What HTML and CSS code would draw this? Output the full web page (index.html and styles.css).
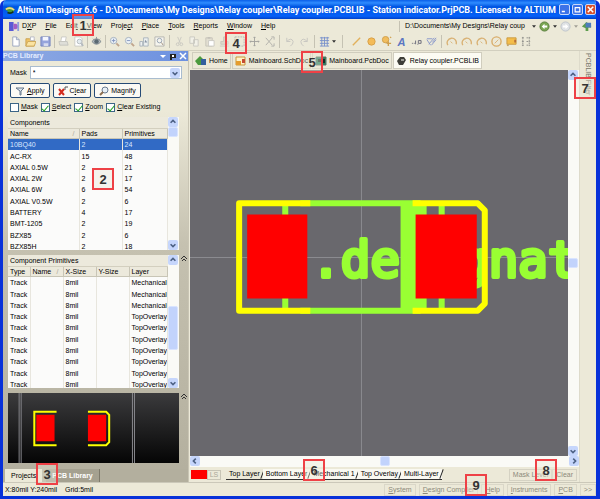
FILE: index.html
```html
<!DOCTYPE html>
<html lang="en">
<head>
    <meta charset="UTF-8">
    <meta name="viewport" content="width=device-width, initial-scale=1.0">
    <title>Altium Designer 6.6</title>
    <link rel="stylesheet" href="styles.css">
</head>
<body>
    <svg class="defs" aria-hidden="true">
        <symbol id="i-new" viewBox="0 0 12 12"><path d="M3 1h4l3 3v7H3z" fill="#fff" stroke="#99a5be"/><path d="M7 1v3h3" fill="none" stroke="#99a5be"/></symbol>
        <symbol id="i-open" viewBox="0 0 12 12"><path d="M1 3h4l1 1h4v7H1z" fill="#f0c465" stroke="#c9a050"/><path d="M6 1h4v4H6z" fill="#fff" stroke="#b7b9c4"/><path d="M3 6h9l-2 5H1z" fill="#fbe3a0" stroke="#cda75a"/></symbol>
        <symbol id="i-save" viewBox="0 0 12 12"><path d="M1 1h10v10H1z" fill="#96a4dc" stroke="#7482bb"/><path d="M3 1h6v4H3z" fill="#f4f6ff"/><path d="M4 8h5v3H4z" fill="#d7dcf0"/></symbol>
        <symbol id="i-print" viewBox="0 0 12 12"><path d="M4 1h5L8 6H3z" fill="#fff" stroke="#c9c9c5"/><path d="M1 6h9l1 4H2z" fill="#dedeD8" stroke="#c4c4be"/></symbol>
        <symbol id="i-preview" viewBox="0 0 12 12"><path d="M2 1h6l2 2v8H2z" fill="#fff" stroke="#c9c9c5"/><circle cx="7" cy="6" r="2.5" fill="#e4ebef" stroke="#b4babd"/><path d="M9 8l2 3" stroke="#b4babd" stroke-width="2"/></symbol>
        <symbol id="i-eye" viewBox="0 0 12 12"><path d="M1 6q5-6 10 0q-5 6-10 0z" fill="#b8bfc4" stroke="#7c858b"/><circle cx="6" cy="6" r="2.5" fill="#5a6972"/><path d="M2 3l1 1M6 1v2M10 3L9 4" stroke="#8a9298"/></symbol>
        <symbol id="i-zoom" viewBox="0 0 12 12"><circle cx="5" cy="5" r="3.5" fill="#edf3f7" stroke="#a3afbe"/><path d="M3 5h4M5 3v4" stroke="#7f92bc"/><path d="M8 8l3 3" stroke="#bfa48c" stroke-width="2"/></symbol>
        <symbol id="i-zoomout" viewBox="0 0 12 12"><circle cx="5" cy="5" r="3.5" fill="#edf3f7" stroke="#a3afbe"/><path d="M3 5h4" stroke="#7f92bc"/><path d="M8 8l3 3" stroke="#bfa48c" stroke-width="2"/></symbol>
        <symbol id="i-zoomsel" viewBox="0 0 12 12"><path d="M1 11V6h3v5zM5 11V2h5v9z" fill="#edf0f0" stroke="#a9b2bb"/><path d="M7 4l2 3H6z" fill="#8793a3"/></symbol>
        <symbol id="i-zoombox" viewBox="0 0 12 12"><path d="M1 1h10v10H1z" fill="#f5f4ed" stroke="#b4b4af"/><circle cx="6" cy="5" r="2.5" fill="none" stroke="#98a4b5"/><path d="M8 7l2 3" stroke="#a08e7d"/></symbol>
        <symbol id="i-cut" viewBox="0 0 12 12"><path d="M4 1l3 7M8 1L5 8" stroke="#c9c8c1" fill="none"/><circle cx="4" cy="9" r="1.5" fill="none" stroke="#c9c8c1"/><circle cx="8" cy="9" r="1.5" fill="none" stroke="#c9c8c1"/></symbol>
        <symbol id="i-copy" viewBox="0 0 12 12"><path d="M1 1h5v7H1zM5 4h5v7H5z" fill="#f2f1e8" stroke="#c9c8c1"/></symbol>
        <symbol id="i-paste" viewBox="0 0 12 12"><path d="M2 2h7v9H2z" fill="#e2dfd1" stroke="#c6c4b9"/><path d="M4 1h3v2H4z" fill="#c4c2b9"/><path d="M5 5h6v6H5z" fill="#fff" stroke="#c9c8c1"/></symbol>
        <symbol id="i-stamp" viewBox="0 0 12 12"><path d="M5 1h2v5h3v3H2V6h3zM1 11h10" fill="#ddd9c9" stroke="#c9c7bc"/></symbol>
        <symbol id="i-select" viewBox="0 0 12 12"><path d="M1 1h10v10H1z" fill="none" stroke="#8d9195" stroke-dasharray="2 1"/></symbol>
        <symbol id="i-move" viewBox="0 0 12 12"><path d="M6 1v10M1 6h10M5 2l1-1 1 1M5 10l1 1 1-1M2 5L1 6l1 1M10 5l1 1-1 1" fill="none" stroke="#a2a29e"/></symbol>
        <symbol id="i-cross" viewBox="0 0 12 12"><path d="M2 2l7 8M9 2L2 10" stroke="#b0afaa" fill="none"/><path d="M8 1h3v3M8 11h3V8" fill="none" stroke="#b0afaa"/></symbol>
        <symbol id="i-undo" viewBox="0 0 12 12"><path d="M3 2v4h4M3 6q5-5 7 0q0 3-3 5" fill="none" stroke="#c6c5bf"/></symbol>
        <symbol id="i-redo" viewBox="0 0 12 12"><path d="M9 2v4H5M9 6Q4 1 2 6q0 3 3 5" fill="none" stroke="#c6c5bf"/></symbol>
        <symbol id="i-grid" viewBox="0 0 12 12"><path d="M1 2h10M1 5h10M1 8h10M1 11h10M3 1v10M6 1v10M9 1v10" stroke="#7890cb" fill="none"/></symbol>
        <symbol id="i-line" viewBox="0 0 12 12"><path d="M2 10l8-8" stroke="#e2b15c" stroke-width="1.5"/></symbol>
        <symbol id="i-pad" viewBox="0 0 12 12"><circle cx="6" cy="6" r="4" fill="#f4bb57" stroke="#d7a049"/></symbol>
        <symbol id="i-via" viewBox="0 0 12 12"><circle cx="5" cy="4" r="3.5" fill="#f1bd5e" stroke="#cf9f4d"/><path d="M6 8h5M8 6v5M10 2l1-1" stroke="#cf9f4d" stroke-width="1.5"/></symbol>
        <symbol id="i-coord" viewBox="0 0 12 12"><path d="M1 8h1M3 8h1M5 5v4M8 5h3v3H8zM7 9h1" stroke="#667" fill="none"/></symbol>
        <symbol id="i-dim" viewBox="0 0 12 12"><path d="M1 4l4 6M3 9l6-7M7 7l4-5M1 3h6M6 10l5-6" stroke="#8795c9" fill="none"/></symbol>
        <symbol id="i-arc" viewBox="0 0 12 12"><path d="M2 10A5 5 0 1 1 11 9" fill="none" stroke="#d9b174" stroke-width="1.5"/><path d="M5 6l2 2" stroke="#d9b174"/></symbol>
        <symbol id="i-circle" viewBox="0 0 12 12"><circle cx="6" cy="6" r="5" fill="none" stroke="#d9ad6a" stroke-width="1.5"/><path d="M4 8l4-4" stroke="#d9b174"/></symbol>
        <symbol id="i-fill" viewBox="0 0 12 12"><path d="M1 2h10v7H1z" fill="#f4bd4a" stroke="#c99a41"/><path d="M1 9h2v2H1z" fill="#c6a568"/><path d="M9 4h2v3H9z" fill="#b86f39"/></symbol>
        <symbol id="i-array" viewBox="0 0 12 12"><path d="M1 2h3M6 2h4M1 6h3M6 6h4M1 10h3M6 10h4M2 1v10M9 1v10" stroke="#8e8e8a" fill="none" stroke-dasharray="2 1"/></symbol>
        <symbol id="i-up" viewBox="0 0 10 10"><path d="M2 6l3-3 3 3" fill="none" stroke="#4d6185" stroke-width="2"/></symbol>
        <symbol id="i-down" viewBox="0 0 10 10"><path d="M2 4l3 3 3-3" fill="none" stroke="#4d6185" stroke-width="2"/></symbol>
        <symbol id="i-left" viewBox="0 0 10 10"><path d="M6 2L3 5l3 3" fill="none" stroke="#4d6185" stroke-width="2"/></symbol>
        <symbol id="i-right" viewBox="0 0 10 10"><path d="M4 2l3 3-3 3" fill="none" stroke="#4d6185" stroke-width="2"/></symbol>
        <symbol id="i-collapse" viewBox="0 0 8 8"><path d="M1 4l3-3 3 3M2 6l2-2 2 2" fill="none" stroke="#333"/></symbol>
        <symbol id="i-caret" viewBox="0 0 5 3"><path d="M0 0h5L2.500 3z" fill="#333"/></symbol>
    </svg>

    <div class="window">
        <header class="titlebar">
            <svg class="app-icon" viewBox="0 0 12 12"><path d="M0 5q6-7 12 1q-5 6-12-1z" fill="#4a9a35"/><path d="M1 5q6-3 10 1" fill="none" stroke="#f1d98a" stroke-width="2"/><path d="M3 9q4 2 7-1" fill="none" stroke="#17370f" stroke-width="2"/></svg>
            <h1 class="title">Altium Designer 6.6 - D:\Documents\My Designs\Relay coupler\Relay coupler.PCBLIB - Station indicator.PrjPCB. Licensed to ALTIUM</h1>
            <button class="win-btn" aria-label="Minimize"><svg viewBox="0 0 9 9"><path d="M1 7h4" stroke="#fff" stroke-width="2"/></svg></button>
            <button class="win-btn" aria-label="Maximize"><svg viewBox="0 0 9 9"><path d="M1 2h7M1.500 2v5.500h6V2" fill="none" stroke="#fff" stroke-width="1.500"/></svg></button>
            <button class="win-btn close" aria-label="Close"><svg viewBox="0 0 9 9"><path d="M1 1l7 7M8 1L1 8" stroke="#fff" stroke-width="2"/></svg></button>
        </header>

        <nav class="menubar">
            <svg class="dxp-icon" viewBox="0 0 12 12"><path d="M0 1h5v10H0z" fill="#5b5bd6"/><path d="M5 3h3l3 3-3 3H5z" fill="#a55fc4"/><path d="M9 1h2v10H9z" fill="#8f9fdd"/></svg>
            <button>D<u>X</u>P</button>
            <button><u>F</u>ile</button>
            <button>Edi<u>t</u></button>
            <button><u>V</u>iew</button>
            <button>Proje<u>c</u>t</button>
            <button><u>P</u>lace</button>
            <button><u>T</u>ools</button>
            <button><u>R</u>eports</button>
            <button><u>W</u>indow</button>
            <button><u>H</u>elp</button>
            <div class="address">
                <input type="text" value="D:\Documents\My Designs\Relay coup" aria-label="Address">
                <svg class="caret"><use href="#i-caret"/></svg>
                <svg class="nav-icon" viewBox="0 0 12 12"><circle cx="6" cy="6" r="5" fill="#7aa552" stroke="#587e3c"/><path d="M3 6l3-3v2h3v2H6v2z" fill="#fff"/></svg>
                <svg class="caret"><use href="#i-caret"/></svg>
                <svg class="nav-icon" viewBox="0 0 12 12"><circle cx="6" cy="6" r="5" fill="#dfe2e4" stroke="#bcc3ca"/><path d="M9 6L6 3v2H3v2h3v2z" fill="#fff"/></svg>
                <svg class="caret dim"><use href="#i-caret"/></svg>
                <svg class="nav-icon" viewBox="0 0 12 12"><path d="M1 6l5-5 5 4v2H8v4H5V8z" fill="#5d9d4d"/><path d="M5 2h6v5H5z" fill="#4f7dbc"/></svg>
            </div>
        </nav>

        <div class="toolbar">
            <button aria-label="New"><svg><use href="#i-new"/></svg></button>
            <button aria-label="Open"><svg><use href="#i-open"/></svg></button>
            <button aria-label="Save"><svg><use href="#i-save"/></svg></button>
            <i class="sep"></i>
            <button aria-label="Print"><svg><use href="#i-print"/></svg></button>
            <button aria-label="Preview"><svg><use href="#i-preview"/></svg></button>
            <i class="sep"></i>
            <button aria-label="Browse"><svg><use href="#i-eye"/></svg></button>
            <i class="sep"></i>
            <button aria-label="Zoom in"><svg><use href="#i-zoom"/></svg></button>
            <button aria-label="Zoom out"><svg><use href="#i-zoomout"/></svg></button>
            <button aria-label="Zoom selected"><svg><use href="#i-zoomsel"/></svg></button>
            <button aria-label="Zoom area"><svg><use href="#i-zoombox"/></svg></button>
            <i class="sep wide"></i>
            <button aria-label="Cut"><svg><use href="#i-cut"/></svg></button>
            <button aria-label="Copy"><svg><use href="#i-copy"/></svg></button>
            <button aria-label="Paste"><svg><use href="#i-paste"/></svg></button>
            <button aria-label="Rubber stamp"><svg><use href="#i-stamp"/></svg></button>
            <button aria-label="Select"><svg><use href="#i-select"/></svg></button>
            <button aria-label="Move"><svg><use href="#i-move"/></svg></button>
            <button aria-label="Deselect"><svg><use href="#i-cross"/></svg></button>
            <i class="sep wide"></i>
            <button aria-label="Undo"><svg><use href="#i-undo"/></svg></button>
            <button aria-label="Redo"><svg><use href="#i-redo"/></svg></button>
            <i class="sep wide"></i>
            <button aria-label="Grid"><svg><use href="#i-grid"/></svg></button>
            <svg class="caret"><use href="#i-caret"/></svg>
            <i class="sep grip"></i>
            <button aria-label="Line"><svg><use href="#i-line"/></svg></button>
            <button aria-label="Pad"><svg><use href="#i-pad"/></svg></button>
            <button aria-label="Via"><svg><use href="#i-via"/></svg></button>
            <button class="letter" aria-label="String">A</button>
            <button aria-label="Coordinate"><svg><use href="#i-coord"/></svg></button>
            <button aria-label="Dimension"><svg><use href="#i-dim"/></svg></button>
            <i class="sep wide"></i>
            <button aria-label="Arc by center"><svg><use href="#i-arc"/></svg></button>
            <button aria-label="Arc by edge"><svg><use href="#i-arc"/></svg></button>
            <button aria-label="Arc any angle"><svg><use href="#i-arc"/></svg></button>
            <button aria-label="Full circle"><svg><use href="#i-circle"/></svg></button>
            <button aria-label="Fill"><svg><use href="#i-fill"/></svg></button>
            <button aria-label="Paste array"><svg><use href="#i-array"/></svg></button>
        </div>

        <div class="workspace">
            <aside class="panel">
                <div class="panel-title">
                    <span>PCB Library</span>
                    <svg viewBox="0 0 10 8"><path d="M2 3h6L5 6z" fill="#fff"/></svg>
                    <svg viewBox="0 0 10 8"><path d="M2 2h6v4H4v2H2z" fill="#222"/><path d="M4 3h2v2H4z" fill="#fff"/></svg>
                    <svg viewBox="0 0 10 8"><path d="M2 1l6 6M8 1L2 7" stroke="#fff" stroke-width="1.500"/></svg>
                </div>

                <div class="filters">
                    <div class="mask-row">
                        <label for="mask">Mask</label>
                        <div class="combo">
                            <input type="text" id="mask" value="*">
                            <button class="arrow" aria-label="Open list"><svg><use href="#i-down"/></svg></button>
                        </div>
                    </div>
                    <div class="btn-row">
                        <button class="btn"><svg viewBox="0 0 10 10"><path d="M1 2h8L6 5v4H5V5z" fill="#dde6ef" stroke="#66788c"/></svg><span><u>A</u>pply</span></button>
                        <button class="btn"><svg viewBox="0 0 10 10"><path d="M1 3l5 6M6 3L1 9" stroke="#d42c1e" stroke-width="2"/><path d="M7 4V1h3" stroke="#555" fill="none"/></svg><span>C<u>l</u>ear</span></button>
                        <button class="btn"><svg viewBox="0 0 10 10"><circle cx="6" cy="4" r="3" fill="#e7eff5" stroke="#697a91"/><path d="M4 6L1 9" stroke="#8d6e50" stroke-width="2"/></svg><span>Ma<u>g</u>nify</span></button>
                    </div>
                    <div class="check-row">
                        <label><input type="checkbox"><span><u>M</u>ask</span></label>
                        <label><input type="checkbox" checked><span><u>S</u>elect</span></label>
                        <label><input type="checkbox" checked><span><u>Z</u>oom</span></label>
                        <label><input type="checkbox" checked><span><u>C</u>lear Existing</span></label>
                    </div>
                </div>

                <section class="list">
                    <div class="list-main">
                        <h2>Components</h2>
                        <table class="components">
                            <thead><tr><th class="sorted">Name</th><th>Pads</th><th>Primitives</th></tr></thead>
                            <tbody>
                                <tr class="selected"><td>10BQ40</td><td>2</td><td>24</td></tr>
                                <tr><td>AC-RX</td><td>15</td><td>48</td></tr>
                                <tr><td>AXIAL 0.5W</td><td>2</td><td>21</td></tr>
                                <tr><td>AXIAL 2W</td><td>2</td><td>17</td></tr>
                                <tr><td>AXIAL 6W</td><td>6</td><td>54</td></tr>
                                <tr><td>AXIAL V0.5W</td><td>2</td><td>6</td></tr>
                                <tr><td>BATTERY</td><td>4</td><td>17</td></tr>
                                <tr><td>BMT-1205</td><td>2</td><td>19</td></tr>
                                <tr><td>BZX85</td><td>2</td><td>6</td></tr>
                                <tr><td>BZX85H</td><td>2</td><td>18</td></tr>
                            </tbody>
                        </table>
                    </div>
                    <div class="vscroll">
                        <button class="arrow" aria-label="Scroll up"><svg><use href="#i-up"/></svg></button>
                        <i class="thumb short"></i>
                        <button class="arrow" aria-label="Scroll down"><svg><use href="#i-down"/></svg></button>
                    </div>
                    <span class="gutter"></span>
                </section>

                <section class="list">
                    <div class="list-main">
                        <h2>Component Primitives</h2>
                        <table class="primitives">
                            <thead><tr><th>Type</th><th class="sorted">Name</th><th>X-Size</th><th>Y-Size</th><th>Layer</th></tr></thead>
                            <tbody>
                                <tr><td>Track</td><td></td><td>8mil</td><td></td><td>Mechanical</td></tr>
                                <tr><td>Track</td><td></td><td>8mil</td><td></td><td>Mechanical</td></tr>
                                <tr><td>Track</td><td></td><td>8mil</td><td></td><td>Mechanical</td></tr>
                                <tr><td>Track</td><td></td><td>8mil</td><td></td><td>TopOverlay</td></tr>
                                <tr><td>Track</td><td></td><td>8mil</td><td></td><td>TopOverlay</td></tr>
                                <tr><td>Track</td><td></td><td>8mil</td><td></td><td>TopOverlay</td></tr>
                                <tr><td>Track</td><td></td><td>8mil</td><td></td><td>TopOverlay</td></tr>
                                <tr><td>Track</td><td></td><td>8mil</td><td></td><td>TopOverlay</td></tr>
                                <tr><td>Track</td><td></td><td>8mil</td><td></td><td>TopOverlay</td></tr>
                                <tr><td>Track</td><td></td><td>8mil</td><td></td><td>TopOverlay</td></tr>
                            </tbody>
                        </table>
                    </div>
                    <div class="vscroll">
                        <button class="arrow" aria-label="Scroll up"><svg><use href="#i-up"/></svg></button>
                        <i class="thumb long"></i>
                        <button class="arrow" aria-label="Scroll down"><svg><use href="#i-down"/></svg></button>
                    </div>
                    <svg class="gutter"><use href="#i-collapse"/></svg>
                </section>

                <section class="list preview">
                    <svg class="preview-view" viewBox="0 0 169 70" preserveAspectRatio="xMidYMid slice">
                        <path d="M11 0v70M13 0v70M123 0v70M125 0v70" stroke="#85858a"/>
                        <path d="M28 22h18v26H28zM79 22h18v26H79z" fill="#f00"/>
                        <path d="M48 19H26v33h22M79 19h18l3 3v27l-3 3H79" fill="none" stroke="#ff0" stroke-width="2"/>
                    </svg>
                    <svg class="gutter"><use href="#i-collapse"/></svg>
                </section>

                <div class="panel-tabs">
                    <button>Projects</button>
                    <button class="active">PCB Library</button>
                </div>
            </aside>

            <main class="editor">
                <div class="doc-tabs">
                    <button><svg viewBox="0 0 12 10"><path d="M0 5l5-5 5 5-3 4H3z" fill="#4b9a3e"/><path d="M6 3h5v6H6z" fill="#335f9d"/></svg>Home</button>
                    <button><svg viewBox="0 0 12 10"><path d="M1 1h9v8H1z" fill="#fff3c6" stroke="#c8973c"/><path d="M1 5h5v4H1z" fill="#e59c2d"/><path d="M7 3h3v4H7z" fill="#c64a32"/></svg>Mainboard.SchDoc</button>
                    <button><svg viewBox="0 0 12 10"><path d="M1 1h10v8H1z" fill="#23805f" stroke="#5a6e62"/><path d="M3 3h3v3H3zM8 3h2v4H8z" fill="#172d27"/></svg>Mainboard.PcbDoc</button>
                    <button class="active"><svg viewBox="0 0 12 10"><path d="M1 5l3-4h4l2 3-3 5H3z" fill="#3e3e38"/><path d="M5 3h3v2H5z" fill="#9a9a94"/></svg>Relay coupler.PCBLIB</button>
                </div>

                <div class="view">
                    <svg class="canvas" viewBox="190 71 377 385" preserveAspectRatio="xMidYMid slice">
                        <path d="M361 0v600M0 258h800" stroke="#8b8b90"/>
                        <path d="M300 204h120M300 311h120M285 204v107M441 204v107" fill="none" stroke="#9f3" stroke-width="6"/>
                        <path d="M400 202h26v111h-26z" fill="#9f3"/>
                        <text class="designator" x="311" y="277">.designator</text>
                        <path d="M310 204H239v107h71M412 204h65l7 7v93l-7 7h-65" fill="none" stroke="#ff0" stroke-width="6" stroke-linejoin="round"/>
                        <path d="M247 215h60v84h-60zM415 215h61v84h-61z" fill="#f00"/>
                    </svg>
                    <div class="vscroll">
                        <button class="arrow" aria-label="Scroll up"><svg><use href="#i-up"/></svg></button>
                        <i class="thumb middle"></i>
                        <button class="arrow" aria-label="Scroll down"><svg><use href="#i-down"/></svg></button>
                    </div>
                    <div class="hscroll">
                        <button class="arrow" aria-label="Scroll left"><svg><use href="#i-left"/></svg></button>
                        <i class="thumb middle"></i>
                        <button class="arrow" aria-label="Scroll right"><svg><use href="#i-right"/></svg></button>
                    </div>
                </div>

                <div class="layer-bar">
                    <span class="swatch"></span>
                    <button class="ls">LS</button>
                    <div class="layers">
                        <button class="active">Top Layer</button>
                        <button>Bottom Layer</button>
                        <button>Mechanical 1</button>
                        <button>Top Overlay</button>
                        <button>Multi-Layer</button>
                    </div>
                    <button class="level">Mask Level</button>
                    <button class="level">Clear</button>
                </div>
            </main>

            <div class="side-tab"><button>PCBLIB Filter</button></div>
        </div>

        <footer class="statusbar">
            <span>X:80mil Y:240mil</span>
            <span class="grid-size">Grid:5mil</span>
            <div class="status-buttons">
                <button><u>S</u>ystem</button>
                <button><u>D</u>esign Compiler</button>
                <button><u>H</u>elp</button>
                <button><u>I</u>nstruments</button>
                <button><u>P</u>CB</button>
                <button>&gt;&gt;</button>
            </div>
        </footer>

        <!-- numbered callouts over the window -->
        <span class="callout c1">1</span>
        <span class="callout c2">2</span>
        <span class="callout c3">3</span>
        <span class="callout c4">4</span>
        <span class="callout c5">5</span>
        <span class="callout c6">6</span>
        <span class="callout c7">7</span>
        <span class="callout c8">8</span>
        <span class="callout c9">9</span>
    </div>
</body>
</html>
```
FILE: styles.css
```css
* {
    margin: 0;
    padding: 0;
    box-sizing: border-box;
}

body {
    font-family: "Liberation Sans", Arial, sans-serif;
    font-size: 7px;
    line-height: 10px;
    color: #000;
    background: #fff;
    height: 100vh;
    overflow: hidden;
}

button,
input {
    font: inherit;
    color: inherit;
    background: none;
    border: none;
    white-space: nowrap;
}

svg {
    display: block;
    flex: none;
}

.defs {
    display: none;
}

.window {
    position: relative;
    display: flex;
    flex-direction: column;
    height: 100vh;
    border: solid #0831d9;
    border-width: 0 4px 3px 3px;
    border-radius: 6px 6px 0 0;
    background: #ece9d8;
    overflow: hidden;
}

/* Title bar */
.titlebar {
    display: flex;
    align-items: center;
    flex: none;
    height: 19px;
    gap: 2px;
    margin: 0 -4px 0 -3px;
    padding: 0 4px 0 5px;
    background: linear-gradient(#0a5fe8, #2f8cff 15%, #0055e2 35%, #0560f8 85%, #0040c8);
}

.app-icon {
    width: 10px;
    height: 10px;
}

.title {
    flex: 1;
    font: bold 9px/12px Roboto, sans-serif;
    color: #fff;
    white-space: nowrap;
    overflow: hidden;
}

.win-btn {
    display: grid;
    place-items: center;
    width: 11px;
    height: 11px;
    background: #3c72e8;
    border: 1px solid #c8d8fa;
    border-radius: 2px;
}

.win-btn.close {
    background: #d8512c;
}

.win-btn svg {
    width: 7px;
    height: 7px;
}

/* Menu and toolbar */
.menubar {
    display: flex;
    align-items: center;
    flex: none;
    height: 14px;
    padding-left: 6px;
    gap: 9px;
}

.dxp-icon {
    width: 11px;
    height: 11px;
    margin-right: -7px;
}

.address {
    display: flex;
    align-items: center;
    gap: 3px;
    margin-left: auto;
    padding: 0 4px 0 5px;
    border-left: 1px solid #c5c2b3;
}

.address input {
    width: 124px;
}

.nav-icon {
    width: 11px;
    height: 11px;
}

.caret {
    width: 4px;
    height: 3px;
}

.dim {
    opacity: 0.4;
}

.toolbar {
    display: flex;
    align-items: center;
    flex: none;
    height: 18px;
    padding-left: 5px;
    border-bottom: 1px solid #d2cfbf;
}

.toolbar button {
    display: grid;
    place-items: center;
    width: 15px;
    height: 14px;
}

.toolbar button svg {
    width: 11px;
    height: 11px;
}

.toolbar .letter {
    font: italic bold 11px/12px "Liberation Sans", sans-serif;
    color: #5b76c2;
}

.sep {
    width: 1px;
    height: 13px;
    margin: 0 1px;
    background: #c5c2b3;
}

.sep.wide {
    margin: 0 2px;
}

.sep.grip {
    margin: 0 6px;
}

/* Main area */
.workspace {
    display: grid;
    grid-template-columns: 186px minmax(0, 1fr) 17px;
    flex: 1;
    min-height: 0;
}

.panel {
    display: flex;
    flex-direction: column;
    min-height: 0;
    border-right: 1px solid #c9c5b4;
    background: linear-gradient(#ece9d8 14%, #c5c1b0 45%, #b3af9e);
}

.panel-title {
    display: flex;
    align-items: center;
    height: 10px;
    font-weight: bold;
    color: #e3ecff;
    background: linear-gradient(90deg, #8ea9e2, #6d91e0);
}

.panel-title span {
    flex: 1;
}

.panel-title svg {
    width: 10px;
    height: 8px;
}

.filters {
    display: flex;
    flex-direction: column;
    gap: 4px;
    padding: 5px 6px 5px 7px;
}

.mask-row {
    display: flex;
    align-items: center;
    gap: 3px;
}

.combo {
    display: flex;
    flex: 1;
    height: 13px;
    padding: 1px;
    background: #fff;
    border: 1px solid #a9bccf;
}

.combo input {
    flex: 1;
    min-width: 0;
    padding-left: 1px;
}

.btn-row {
    display: flex;
    gap: 3px;
}

.btn {
    display: flex;
    align-items: center;
    justify-content: center;
    gap: 2px;
    height: 15px;
    padding: 0 4px;
    background: #fbfaf5;
    border: 1px solid #264b76;
    border-radius: 2px;
}

.btn svg {
    width: 10px;
    height: 10px;
}

.check-row {
    display: flex;
    gap: 3px;
    white-space: nowrap;
}

.check-row label {
    display: flex;
    align-items: center;
    gap: 2px;
}

.check-row input {
    appearance: none;
    display: grid;
    place-items: center;
    width: 9px;
    height: 9px;
    background: #fff;
    border: 1px solid #3c6587;
}

.check-row input:checked::after {
    content: "";
    width: 3px;
    height: 6px;
    border: solid #21a121;
    border-width: 0 1px 1px 0;
    transform: rotate(40deg);
}

/* Lists */
.list {
    display: grid;
    grid-template-columns: minmax(0, 1fr) 11px 9px;
    margin: 0 0 5px 5px;
}

.list-main {
    height: 133px;
    background: #fbfbfa;
    overflow: hidden;
}

.list h2 {
    height: 12px;
    padding-left: 2px;
    font-size: 7px;
    font-weight: normal;
    line-height: 12px;
    background: #ece9dc;
    border-bottom: 1px solid #d3cfbf;
}

.list table {
    width: 100%;
    height: 123px;
    table-layout: fixed;
    border-collapse: collapse;
}

.list th,
.list td {
    padding: 0 0 0 2px;
    text-align: left;
    font-weight: normal;
    line-height: 9px;
    white-space: nowrap;
    overflow: hidden;
    border-right: 1px solid #e8e6de;
}

.list th {
    background: #ece9dc;
    border-right-color: #c8c5b6;
    border-bottom: 1px solid #c8c5b6;
}

.sorted::after {
    content: "/";
    float: right;
    margin-right: 4px;
    color: #aaa799;
}

.components th:nth-child(1) {
    width: 71px;
}

.components th:nth-child(2) {
    width: 43px;
}

.primitives th:nth-child(1) {
    width: 22px;
}

.primitives th:nth-child(2),
.primitives th:nth-child(3),
.primitives th:nth-child(4) {
    width: 33px;
}

.list .selected td {
    color: #d9e6ff;
    background: #316ac5;
}

.gutter {
    width: 8px;
    height: 8px;
    margin-left: 1px;
}

.preview-view {
    grid-column: 1 / 3;
    width: 100%;
    height: 70px;
    background: linear-gradient(#3b3b3d, #050505);
}

.preview .gutter {
    grid-column: 3;
}

.panel-tabs {
    display: flex;
    gap: 4px;
    height: 13px;
    margin-top: auto;
    padding-left: 2px;
    background: #b3af9e;
}

.panel-tabs button {
    padding: 0 6px;
    background: #ece9d8;
}

.panel-tabs .active {
    font-weight: bold;
    color: #fff;
    background: #a5a190;
    border-right: 1px solid #7d796a;
}

/* Scroll bars */
.arrow {
    display: grid;
    place-items: center;
    flex: none;
    width: 10px;
    height: 10px;
    background: #c6d6fc;
    border-radius: 2px;
}

.arrow svg {
    width: 8px;
    height: 8px;
}

.vscroll,
.hscroll {
    display: flex;
    justify-content: space-between;
    background: #fafaf6;
}

.vscroll {
    flex-direction: column;
}

.thumb {
    flex: none;
    width: 10px;
    height: 10px;
    background: #c2d3fc;
    border: 1px solid #d9e4ff;
    border-radius: 2px;
}

.thumb.short {
    margin-bottom: auto;
}

.thumb.long {
    height: 44px;
    margin-top: 12px;
}

/* Editor */
.editor {
    display: flex;
    flex-direction: column;
    min-width: 0;
}

.doc-tabs {
    display: flex;
    gap: 1px;
    padding: 1px 0 1px 3px;
}

.doc-tabs button {
    display: flex;
    align-items: center;
    gap: 2px;
    height: 17px;
    padding: 0 2px;
    border: 1px solid #d0cdbe;
}

.doc-tabs svg {
    width: 12px;
    height: 10px;
}

.doc-tabs .active {
    background: #fcfbf3;
}

.view {
    display: grid;
    grid-template: minmax(0, 1fr) 11px / minmax(0, 1fr) 11px;
    flex: 1;
    min-height: 0;
    padding-left: 1px;
}

.canvas {
    width: 100%;
    height: 100%;
    background: #69686d;
}

.designator {
    font: 49px "DejaVu Sans Mono", monospace;
    fill: #9f3;
    stroke: #9f3;
    stroke-width: 4px;
    stroke-linejoin: round;
}

.hscroll {
    grid-column: 1 / 3;
}

.layer-bar {
    display: flex;
    align-items: center;
    height: 15px;
    padding: 0 2px;
}

.swatch {
    width: 16px;
    height: 9px;
    background: #f00;
}

.ls {
    width: 14px;
    height: 10px;
    line-height: 8px;
    color: #aaa799;
    border: 1px solid #c8c5b6;
}

.layers {
    display: flex;
    flex: 1;
    margin-left: 5px;
}

.layers button {
    position: relative;
    padding: 0 3px;
    background: #faf9f2;
    border-bottom: 1px solid #333;
}

.layers button::after {
    content: "";
    position: absolute;
    top: 0;
    right: 0;
    width: 1px;
    height: 10px;
    background: #222;
    transform: rotate(20deg);
}

.layers .active {
    background: #ece9d8;
}

.level {
    height: 12px;
    padding: 0 3px;
    color: #8c897b;
    border: 1px solid #d5d2c3;
}

.side-tab {
    padding-top: 2px;
    border-left: 1px solid #dedbcb;
}

.side-tab button {
    writing-mode: vertical-rl;
    width: 15px;
    color: #77756b;
}

/* Status bar */
.statusbar {
    display: flex;
    align-items: center;
    flex: none;
    height: 14px;
    padding-left: 2px;
    border-top: 1px solid #cbc8b9;
}

.grid-size {
    margin-left: 8px;
}

.status-buttons {
    display: flex;
    gap: 3px;
    margin-left: auto;
}

.status-buttons button {
    padding: 0 3px;
    color: #8c897b;
    border: 1px solid #dad7c8;
}

/* Callouts */
.callout {
    position: absolute;
    width: 22px;
    height: 22px;
    font: bold 13px/19px "Liberation Sans", sans-serif;
    text-align: center;
    color: #333;
    background: rgba(236, 233, 216, 0.4);
    border: 2px solid #ee4146;
}

.c1 { left: 69px; top: 14px; }
.c2 { left: 89px; top: 168px; }
.c3 { left: 33px; bottom: 11px; }
.c4 { left: 222px; top: 32px; }
.c5 { left: 298px; top: 51px; }
.c6 { left: 300px; bottom: 15px; }
.c7 { right: 0; top: 77px; }
.c8 { right: 39px; bottom: 15px; }
.c9 { right: 109px; bottom: 0; }
```
